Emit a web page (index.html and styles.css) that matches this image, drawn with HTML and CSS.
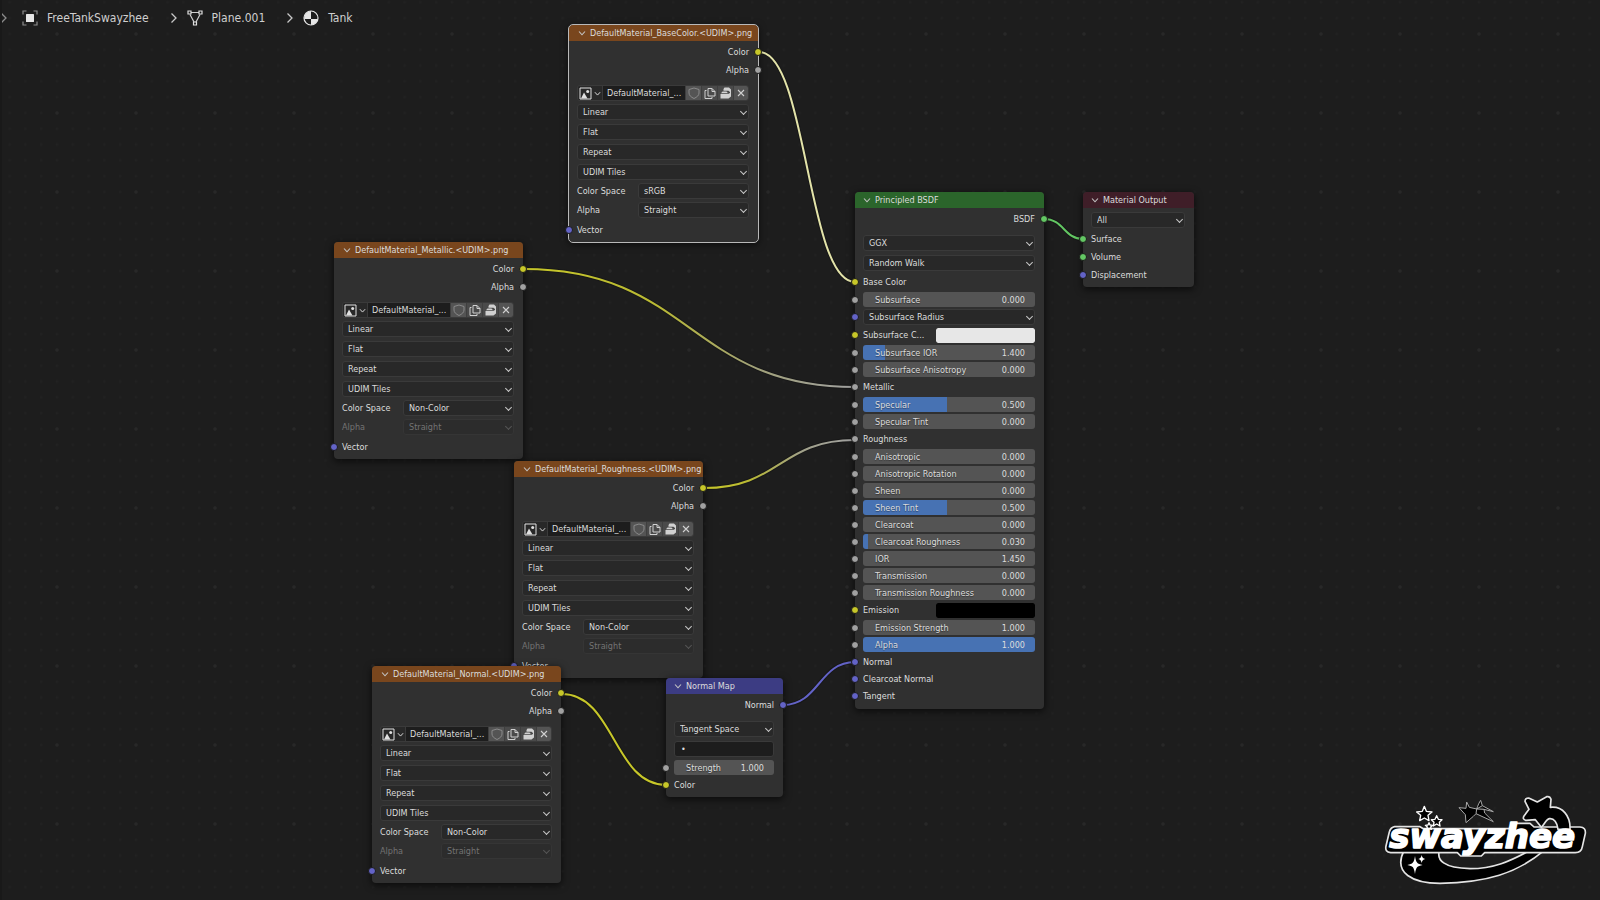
FILE: index.html
```html
<!DOCTYPE html>
<html lang="en">
<head>
<meta charset="utf-8">
<title>Shader Editor</title>
<link rel="stylesheet" href="styles.css">
</head>
<body>
<svg class="symbols" aria-hidden="true">
  <symbol id="i-chevron" viewBox="0 0 8 8"><path d="M1 2.5 4 5.8 7 2.5" fill="none" stroke="currentColor" stroke-width="1.1"/></symbol>
  <symbol id="i-right" viewBox="0 0 8 12"><path d="M1.5 1.5 6 6 1.5 10.5" fill="none" stroke="currentColor" stroke-width="1.3"/></symbol>
  <symbol id="i-image" viewBox="0 0 13 13"><path d="M1 1h11v11H1z" fill="none" stroke="currentColor"/><path d="M2 11.5 5 5.5l3.500 6z" fill="currentColor"/><circle cx="8.700" cy="4.500" r="1.500" fill="currentColor"/></symbol>
  <symbol id="i-shield" viewBox="0 0 12 12"><path d="M6 1 11 2.500V6c0 2.500-2 4-5 5.500C3 10 1 8.500 1 6V2.500z" fill="none" stroke="currentColor"/></symbol>
  <symbol id="i-copy" viewBox="0 0 12 12"><path d="M4 1.500h4L11 4.500v4.500H4z M8 1.500v3h3" fill="none" stroke="currentColor"/><path d="M2.500 3.500h-1.500v8h7v-1.500" fill="none" stroke="currentColor"/></symbol>
  <symbol id="i-pack" viewBox="0 0 12 12"><path d="M4.500 0.500h4.500l2 2v3.500h-1V5L8.500 3.800H3.500V2z" fill="currentColor"/><path d="M1 6.300 2.500 4.500h4L8 6.300z" fill="currentColor"/><path d="M0.500 7h7.500l3-1.500v4L8.500 11.500h-8z" fill="currentColor"/></symbol>
  <symbol id="i-close" viewBox="0 0 12 12"><path d="M3 3l6 6M9 3l-6 6" fill="none" stroke="currentColor" stroke-width="1.100"/></symbol>
</svg>

<main class="editor">
  <svg class="canvas" aria-hidden="true">
    <defs>
      <pattern id="minor" x="49" y="26" width="15.8" height="15.8" patternUnits="userSpaceOnUse"><circle class="dot-minor" cx="8" cy="8" r="1.300"/></pattern>
      <pattern id="major" x="17" y="-6" width="79" height="79" patternUnits="userSpaceOnUse"><circle class="dot-major" cx="40" cy="40" r="1.700"/></pattern>
      <linearGradient id="g-metal" gradientUnits="userSpaceOnUse" x1="524" y1="0" x2="855" y2="0"><stop offset="0" stop-color="#c7c729"/><stop offset="0.4" stop-color="#b9b934"/><stop offset="0.7" stop-color="#a1a17a"/><stop offset="1" stop-color="#a1a1a1"/></linearGradient>
      <linearGradient id="g-rough" gradientUnits="userSpaceOnUse" x1="704" y1="0" x2="855" y2="0"><stop offset="0" stop-color="#c7c729"/><stop offset="0.3" stop-color="#b9b934"/><stop offset="0.65" stop-color="#a1a18a"/><stop offset="1" stop-color="#a1a1a1"/></linearGradient>
    </defs>
    <rect width="100%" height="100%" fill="url(#minor)"/>
    <rect width="100%" height="100%" fill="url(#major)"/>
    <g class="link-shadow">
      <path d="M759 52C807 52 807 282 855 282"/>
      <path d="M524 269C690 269 690 387 855 387"/>
      <path d="M704 488C780 488 780 440 855 440"/>
      <path d="M562 694C614 694 614 785 666 785"/>
      <path d="M783 705C819 705 819 662 855 662"/>
      <path d="M1044 219C1064 219 1064 239 1083 239"/>
    </g>
    <g class="link">
      <path stroke="#e3e3a9" d="M759 52C807 52 807 282 855 282"/>
      <path stroke="url(#g-metal)" d="M524 269C690 269 690 387 855 387"/>
      <path stroke="url(#g-rough)" d="M704 488C780 488 780 440 855 440"/>
      <path stroke="#c7c729" d="M562 694C614 694 614 785 666 785"/>
      <path stroke="#6363c7" d="M783 705C819 705 819 662 855 662"/>
      <path stroke="#63c763" d="M1044 219C1064 219 1064 239 1083 239"/>
    </g>
  </svg>

  <nav class="crumbs" aria-label="Data path">
    <svg class="sep sep-first"><use href="#i-right"/></svg>
    <a class="crumb" href="#object"><svg class="crumb-icon" viewBox="0 0 16 16"><rect x="4" y="4" width="8" height="8" rx="0.5" fill="#e6e6e6"/><path d="M1 4.500V1h3.500M11.500 1H15v3.500M15 11.500V15h-3.500M4.500 15H1v-3.500" fill="none" stroke="#8c8c8c" stroke-width="1.200"/></svg>FreeTankSwayzhee</a>
    <svg class="sep"><use href="#i-right"/></svg>
    <a class="crumb" href="#mesh"><svg class="crumb-icon" viewBox="0 0 16 16"><path d="M4 2.500h8M3 4.500l4 7.500M13 4.500 9 12" fill="none" stroke="#d0d0d0" stroke-width="1.200"/><path d="M1 1h3v3H1zM12 1h3v3h-3zM6.500 12h3v3h-3z" fill="none" stroke="#e0e0e0" stroke-width="1.200"/></svg>Plane.001</a>
    <svg class="sep"><use href="#i-right"/></svg>
    <a class="crumb" href="#material"><svg class="crumb-icon" viewBox="0 0 16 16"><circle cx="8" cy="8" r="7" fill="#1d1d1d" stroke="#e6e6e6" stroke-width="1.200"/><path d="M8 1v8H1.200A7 7 0 0 1 8 1zM8 9h6.900A7 7 0 0 1 8 15z" fill="#e6e6e6"/></svg>Tank</a>
  </nav>

  <section class="node at-metallic">
    <h2 class="head tex"><button class="fold" aria-label="Collapse"><svg><use href="#i-chevron"/></svg></button>DefaultMaterial_Metallic.&lt;UDIM&gt;.png</h2>
    <div class="body">
      <div class="row out">Color<i class="socket yellow"></i></div>
      <div class="row out">Alpha<i class="socket gray"></i></div>
      <div class="stack">
        <div class="id"><button class="browse" aria-label="Browse image"><svg class="pic"><use href="#i-image"/></svg><svg class="mini"><use href="#i-chevron"/></svg></button><input class="name" aria-label="Image name" value="DefaultMaterial_..."><button class="tool shield" aria-label="Fake user"><svg><use href="#i-shield"/></svg></button><button class="tool" aria-label="New image"><svg><use href="#i-copy"/></svg></button><button class="tool" aria-label="Pack"><svg><use href="#i-pack"/></svg></button><button class="tool close" aria-label="Unlink"><svg><use href="#i-close"/></svg></button></div>
        <div class="drop"><select aria-label="Interpolation"><option>Linear</option></select></div>
        <div class="drop"><select aria-label="Projection"><option>Flat</option></select></div>
        <div class="drop"><select aria-label="Extension"><option>Repeat</option></select></div>
        <div class="drop"><select aria-label="Source"><option>UDIM Tiles</option></select></div>
      </div>
      <div class="fields">
        <div class="field"><label for="m-cs">Color Space</label><div class="drop"><select id="m-cs"><option>Non-Color</option></select></div></div>
        <div class="field off"><label for="m-al">Alpha</label><div class="drop"><select id="m-al" disabled><option>Straight</option></select></div></div>
      </div>
      <div class="row">Vector<i class="socket violet"></i></div>
    </div>
  </section>

  <section class="node selected at-base">
    <h2 class="head tex"><button class="fold" aria-label="Collapse"><svg><use href="#i-chevron"/></svg></button>DefaultMaterial_BaseColor.&lt;UDIM&gt;.png</h2>
    <div class="body">
      <div class="row out">Color<i class="socket yellow"></i></div>
      <div class="row out">Alpha<i class="socket gray"></i></div>
      <div class="stack">
        <div class="id"><button class="browse" aria-label="Browse image"><svg class="pic"><use href="#i-image"/></svg><svg class="mini"><use href="#i-chevron"/></svg></button><input class="name" aria-label="Image name" value="DefaultMaterial_..."><button class="tool shield" aria-label="Fake user"><svg><use href="#i-shield"/></svg></button><button class="tool" aria-label="New image"><svg><use href="#i-copy"/></svg></button><button class="tool" aria-label="Pack"><svg><use href="#i-pack"/></svg></button><button class="tool close" aria-label="Unlink"><svg><use href="#i-close"/></svg></button></div>
        <div class="drop"><select aria-label="Interpolation"><option>Linear</option></select></div>
        <div class="drop"><select aria-label="Projection"><option>Flat</option></select></div>
        <div class="drop"><select aria-label="Extension"><option>Repeat</option></select></div>
        <div class="drop"><select aria-label="Source"><option>UDIM Tiles</option></select></div>
      </div>
      <div class="fields">
        <div class="field"><label for="b-cs">Color Space</label><div class="drop"><select id="b-cs"><option>sRGB</option></select></div></div>
        <div class="field"><label for="b-al">Alpha</label><div class="drop"><select id="b-al"><option>Straight</option></select></div></div>
      </div>
      <div class="row">Vector<i class="socket violet"></i></div>
    </div>
  </section>

  <section class="node at-rough">
    <h2 class="head tex"><button class="fold" aria-label="Collapse"><svg><use href="#i-chevron"/></svg></button>DefaultMaterial_Roughness.&lt;UDIM&gt;.png</h2>
    <div class="body">
      <div class="row out">Color<i class="socket yellow"></i></div>
      <div class="row out">Alpha<i class="socket gray"></i></div>
      <div class="stack">
        <div class="id"><button class="browse" aria-label="Browse image"><svg class="pic"><use href="#i-image"/></svg><svg class="mini"><use href="#i-chevron"/></svg></button><input class="name" aria-label="Image name" value="DefaultMaterial_..."><button class="tool shield" aria-label="Fake user"><svg><use href="#i-shield"/></svg></button><button class="tool" aria-label="New image"><svg><use href="#i-copy"/></svg></button><button class="tool" aria-label="Pack"><svg><use href="#i-pack"/></svg></button><button class="tool close" aria-label="Unlink"><svg><use href="#i-close"/></svg></button></div>
        <div class="drop"><select aria-label="Interpolation"><option>Linear</option></select></div>
        <div class="drop"><select aria-label="Projection"><option>Flat</option></select></div>
        <div class="drop"><select aria-label="Extension"><option>Repeat</option></select></div>
        <div class="drop"><select aria-label="Source"><option>UDIM Tiles</option></select></div>
      </div>
      <div class="fields">
        <div class="field"><label for="r-cs">Color Space</label><div class="drop"><select id="r-cs"><option>Non-Color</option></select></div></div>
        <div class="field off"><label for="r-al">Alpha</label><div class="drop"><select id="r-al" disabled><option>Straight</option></select></div></div>
      </div>
      <div class="row">Vector<i class="socket violet"></i></div>
    </div>
  </section>

  <section class="node at-normal">
    <h2 class="head tex"><button class="fold" aria-label="Collapse"><svg><use href="#i-chevron"/></svg></button>DefaultMaterial_Normal.&lt;UDIM&gt;.png</h2>
    <div class="body">
      <div class="row out">Color<i class="socket yellow"></i></div>
      <div class="row out">Alpha<i class="socket gray"></i></div>
      <div class="stack">
        <div class="id"><button class="browse" aria-label="Browse image"><svg class="pic"><use href="#i-image"/></svg><svg class="mini"><use href="#i-chevron"/></svg></button><input class="name" aria-label="Image name" value="DefaultMaterial_..."><button class="tool shield" aria-label="Fake user"><svg><use href="#i-shield"/></svg></button><button class="tool" aria-label="New image"><svg><use href="#i-copy"/></svg></button><button class="tool" aria-label="Pack"><svg><use href="#i-pack"/></svg></button><button class="tool close" aria-label="Unlink"><svg><use href="#i-close"/></svg></button></div>
        <div class="drop"><select aria-label="Interpolation"><option>Linear</option></select></div>
        <div class="drop"><select aria-label="Projection"><option>Flat</option></select></div>
        <div class="drop"><select aria-label="Extension"><option>Repeat</option></select></div>
        <div class="drop"><select aria-label="Source"><option>UDIM Tiles</option></select></div>
      </div>
      <div class="fields">
        <div class="field"><label for="n-cs">Color Space</label><div class="drop"><select id="n-cs"><option>Non-Color</option></select></div></div>
        <div class="field off"><label for="n-al">Alpha</label><div class="drop"><select id="n-al" disabled><option>Straight</option></select></div></div>
      </div>
      <div class="row">Vector<i class="socket violet"></i></div>
    </div>
  </section>

  <section class="node at-map">
    <h2 class="head vector"><button class="fold" aria-label="Collapse"><svg><use href="#i-chevron"/></svg></button>Normal Map</h2>
    <div class="body">
      <div class="row out">Normal<i class="socket violet"></i></div>
      <div class="stack">
        <div class="drop"><select aria-label="Space"><option>Tangent Space</option></select></div>
        <input class="uv" aria-label="UV Map" value="•">
      </div>
      <div class="slider spaced"><input type="range" id="strength" min="0" max="10" step="0.001" value="1"><label for="strength">Strength</label><output>1.000</output><i class="socket gray"></i></div>
      <div class="row">Color<i class="socket yellow"></i></div>
    </div>
  </section>

  <section class="node at-bsdf">
    <h2 class="head shader"><button class="fold" aria-label="Collapse"><svg><use href="#i-chevron"/></svg></button>Principled BSDF</h2>
    <div class="body">
      <div class="row out">BSDF<i class="socket green"></i></div>
      <div class="stack">
        <div class="drop"><select aria-label="Distribution"><option>GGX</option></select></div>
        <div class="drop"><select aria-label="Subsurface method"><option>Random Walk</option></select></div>
      </div>
      <div class="row spaced">Base Color<i class="socket yellow"></i></div>
      <div class="slider"><input type="range" id="s1" value="0"><label for="s1">Subsurface</label><output>0.000</output><i class="socket gray"></i></div>
      <div class="row"><div class="drop"><select aria-label="Subsurface Radius"><option>Subsurface Radius</option></select></div><i class="socket violet"></i></div>
      <div class="row"><label for="c1">Subsurface C...</label><input class="swatch" type="color" id="c1" value="#e7e7e7"><i class="socket yellow"></i></div>
      <div class="slider" style="--fill:13%"><input type="range" id="s2" value="13"><label for="s2">Subsurface IOR</label><output>1.400</output><i class="socket gray"></i></div>
      <div class="slider"><input type="range" id="s3" value="0"><label for="s3">Subsurface Anisotropy</label><output>0.000</output><i class="socket gray"></i></div>
      <div class="row">Metallic<i class="socket gray"></i></div>
      <div class="slider" style="--fill:49%"><input type="range" id="s4" value="50"><label for="s4">Specular</label><output>0.500</output><i class="socket gray"></i></div>
      <div class="slider"><input type="range" id="s5" value="0"><label for="s5">Specular Tint</label><output>0.000</output><i class="socket gray"></i></div>
      <div class="row">Roughness<i class="socket gray"></i></div>
      <div class="slider"><input type="range" id="s6" value="0"><label for="s6">Anisotropic</label><output>0.000</output><i class="socket gray"></i></div>
      <div class="slider"><input type="range" id="s7" value="0"><label for="s7">Anisotropic Rotation</label><output>0.000</output><i class="socket gray"></i></div>
      <div class="slider"><input type="range" id="s8" value="0"><label for="s8">Sheen</label><output>0.000</output><i class="socket gray"></i></div>
      <div class="slider" style="--fill:49%"><input type="range" id="s9" value="50"><label for="s9">Sheen Tint</label><output>0.500</output><i class="socket gray"></i></div>
      <div class="slider"><input type="range" id="s10" value="0"><label for="s10">Clearcoat</label><output>0.000</output><i class="socket gray"></i></div>
      <div class="slider" style="--fill:3%"><input type="range" id="s11" value="3"><label for="s11">Clearcoat Roughness</label><output>0.030</output><i class="socket gray"></i></div>
      <div class="slider"><input type="range" id="s12" value="0"><label for="s12">IOR</label><output>1.450</output><i class="socket gray"></i></div>
      <div class="slider"><input type="range" id="s13" value="0"><label for="s13">Transmission</label><output>0.000</output><i class="socket gray"></i></div>
      <div class="slider"><input type="range" id="s14" value="0"><label for="s14">Transmission Roughness</label><output>0.000</output><i class="socket gray"></i></div>
      <div class="row"><label for="c2">Emission</label><input class="swatch" type="color" id="c2" value="#000000"><i class="socket yellow"></i></div>
      <div class="slider"><input type="range" id="s15" value="0"><label for="s15">Emission Strength</label><output>1.000</output><i class="socket gray"></i></div>
      <div class="slider" style="--fill:100%"><input type="range" id="s16" value="100"><label for="s16">Alpha</label><output>1.000</output><i class="socket gray"></i></div>
      <div class="row tight">Normal<i class="socket violet"></i></div>
      <div class="row tight">Clearcoat Normal<i class="socket violet"></i></div>
      <div class="row tight">Tangent<i class="socket violet"></i></div>
    </div>
  </section>

  <section class="node at-output">
    <h2 class="head output"><button class="fold" aria-label="Collapse"><svg><use href="#i-chevron"/></svg></button>Material Output</h2>
    <div class="body">
      <div class="drop first"><select aria-label="Target"><option>All</option></select></div>
      <div class="row spaced">Surface<i class="socket green"></i></div>
      <div class="row">Volume<i class="socket green"></i></div>
      <div class="row">Displacement<i class="socket violet"></i></div>
    </div>
  </section>

  <svg class="logo" viewBox="0 0 690 360" role="img" aria-label="swayzhee">
    <g class="logo-shape">
      <path d="M102 212C68 280 130 310 210 310C350 308 440 280 522 212L478 212C420 244 370 266 300 266C220 264 200 240 208 212z"/>
      <path d="M74 140H150L160 146H420L436 130H480L492 141H630Q648 142 646 160L637 200Q634 218 616 218H344L334 228H272L262 218H62Q44 216 48 198L58 156Q62 142 74 140z"/>
      <path d="M476 54L502 66L530 50Q540 48 543 58L541 82C578 78 602 108 600 148L564 148C562 128 552 114 538 116C528 118 524 132 514 142L496 119L468 121Q456 118 462 108L477 88L465 64Q465 54 476 54z"/>
    </g>
    <path class="logo-trail" d="M290 66l8 16 22 5c4-12 8-20 12-26l5 16 33 18-28-7 2 11 26 26-52-24-8 8-22 19-2-24-19-21 21 2zM320 87l-2 14M337 77l-17 10 22 1"/>
    <text class="logo-text" x="58" y="204">swayzhee</text>
    <g class="logo-stars">
      <path d="M163 79l6 15 17 2-12 10 3 16-14-8-14 8 3-16-12-10 17-2z"/>
      <path d="M200 107l5 11 11 1-8 8 2 11-10-6-10 6 2-11-8-8 11-1z"/>
      <path d="M177 128l3 7 8 1-6 5 2 7-7-4-7 4 2-7-6-5 8-1z"/>
    </g>
    <path fill="#fff" d="M135 228C138 248 141 252 158 255C141 258 138 262 135 282C132 262 129 258 112 255C129 252 132 248 135 228zM155 225C157 233 159 235 166 237C159 239 157 241 155 249C153 241 151 239 145 237C151 235 153 233 155 225z"/>
  </svg>
</main>
</body>
</html>
```
FILE: styles.css
```css
* { box-sizing: border-box; }

body {
  margin: 0;
  background: #1d1d1d;
  color: #dcdcdc;
  font: 9px/12px "DejaVu Sans Condensed", "DejaVu Sans", sans-serif;
}

button, input, select {
  margin: 0;
  padding: 0;
  border: 0;
  border-radius: 0;
  background: none;
  color: inherit;
  font: inherit;
  outline: 0;
}

.symbols { position: absolute; width: 0; height: 0; }

.editor {
  position: relative;
  min-height: 100vh;
  overflow: hidden;
  border-left: 2px solid #191919;
}

.canvas {
  position: absolute;
  top: 0;
  left: -2px;
  width: calc(100% + 2px);
  height: 100%;
}

.dot-minor { fill: #212121; }
.dot-major { fill: #282828; }
.link path { fill: none; stroke-width: 2; }
.link-shadow path { fill: none; stroke: #111; stroke-width: 4; opacity: 0.5; }

/* Data path */
.crumbs {
  position: relative;
  display: flex;
  align-items: center;
  height: 35px;
  font-size: 12px;
}

.crumb {
  display: flex;
  align-items: center;
  gap: 9px;
  color: #cfcfcf;
  text-decoration: none;
}

.crumb-icon { width: 16px; height: 16px; }
.sep { width: 8px; height: 12px; margin: 0 9px 0 21px; color: #c8c8c8; }
.sep-first { margin: 0 14px 0 -2px; color: #8c8c8c; }

/* Nodes */
.node {
  position: absolute;
  width: 189px;
  border-radius: 4px;
  background: #303030;
  box-shadow: 0 2px 7px 1px rgba(0, 0, 0, 0.55);
}

.selected { outline: 1px solid #b9b9b9; }

.at-base { left: 567px; top: 25px; }
.at-metallic { left: 332px; top: 242px; }
.at-rough { left: 512px; top: 461px; }
.at-normal { left: 370px; top: 666px; }
.at-map { left: 664px; top: 678px; width: 117px; }
.at-bsdf { left: 853px; top: 192px; }
.at-output { left: 1081px; top: 192px; width: 111px; }

.head {
  display: flex;
  align-items: center;
  height: 16px;
  padding-bottom: 1px;
  margin: 0;
  border-radius: 4px 4px 0 0;
  font-size: 9px;
  font-weight: 400;
  white-space: nowrap;
}

.tex { background: #79461d; }
.vector { background: #3c3c83; }
.shader { background: #2b652b; }
.output { background: #3f1e28; }

.fold { display: grid; place-items: center; width: 20px; padding-left: 4px; color: #c4c4c4; }
.tex .fold { width: 21px; }
.fold svg { width: 8px; height: 8px; }

.body { padding: 2px 9px 3px 8px; }
.at-bsdf .body { padding-bottom: 5px; }

.row {
  position: relative;
  display: flex;
  align-items: center;
  justify-content: space-between;
  height: 18px;
}

.tight { height: 17px; }
.out { justify-content: flex-end; }
.spaced { margin-top: 2px; }

.stack { display: grid; gap: 4px; margin-top: 7px; }
.out + .out + .stack { margin-top: 6px; }
.fields { display: grid; gap: 3px; margin: 3px 0; }

.field { display: grid; grid-template-columns: 61px 1fr; align-items: center; }
.off { color: #737373; }

.drop { position: relative; flex: 1; height: 16px; }
.first { margin-top: 2px; }

.drop select {
  display: block;
  width: 100%;
  height: 16px;
  padding-left: 5px;
  border: 1px solid #3a3a3a;
  border-radius: 3px;
  background: #282828;
  appearance: none;
}

.drop select:disabled { border-color: #353535; background: #2c2c2c; color: #737373; opacity: 1; }

.drop::after {
  content: "";
  position: absolute;
  top: 5px;
  right: 3px;
  width: 4px;
  height: 4px;
  border: solid #c8c8c8;
  border-width: 0 1px 1px 0;
  transform: rotate(45deg);
  pointer-events: none;
}

.off .drop::after { border-color: #555; }

.id {
  display: grid;
  grid-template-columns: 24px 1fr 16px 16px 16px 15px;
  height: 16px;
  margin-bottom: -1px;
  overflow: hidden;
  border: 1px solid #3a3a3a;
  border-radius: 3px;
}

.browse { display: flex; align-items: center; gap: 2px; padding-left: 1px; background: #282828; color: #e0e0e0; }
.pic { width: 13px; height: 13px; }
.mini { width: 7px; height: 7px; }
.name { min-width: 0; padding-left: 4px; border-left: 1px solid #3a3a3a; background: #1d1d1d; }
.tool { display: grid; place-items: center; border-left: 1px solid #3f3f3f; background: #4a4a4a; color: #d0d0d0; }
.tool svg { width: 12px; height: 12px; }
.shield, .close { background: #545454; }
.shield { color: #8a8a8a; }

.uv { width: 100%; height: 16px; padding-left: 6px; border: 1px solid #3a3a3a; border-radius: 3px; background: #1d1d1d; }

.slider {
  position: relative;
  display: grid;
  grid-template-columns: 1fr auto;
  align-items: center;
  height: 17px;
  padding: 0 10px 0 12px;
}

.slider > * { grid-row: 1; }
.slider label { grid-column: 1; z-index: 1; pointer-events: none; white-space: nowrap; text-shadow: 0 1px 1px rgba(0, 0, 0, 0.4); }
.slider output { grid-column: 2; z-index: 1; pointer-events: none; }

.slider input {
  grid-column: 1 / 3;
  height: 15px;
  margin: 0 -10px 0 -12px;
  border-radius: 3px;
  background: linear-gradient(90deg, #4772b3 var(--fill, 0%), #545454 var(--fill, 0%));
  appearance: none;
}

.slider input::-webkit-slider-thumb { appearance: none; width: 1px; height: 15px; opacity: 0; }

.swatch { width: 99px; height: 15px; border-radius: 2px; overflow: hidden; }
.swatch::-webkit-color-swatch-wrapper { padding: 0; }
.swatch::-webkit-color-swatch { border: 0; border-radius: 2px; }

/* Sockets sit over the node's edge */
.socket {
  position: absolute;
  top: 50%;
  left: -12px;
  width: 8px;
  height: 8px;
  margin-top: -4px;
  border: 1px solid #1a1a1a;
  border-radius: 50%;
}

.out .socket { left: auto; right: -13px; }
.yellow { background: #c7c729; }
.gray { background: #a1a1a1; }
.violet { background: #6363c7; }
.green { background: #63c763; }

/* Watermark */
.logo { position: absolute; right: 0; bottom: 0; width: 230px; height: 120px; }
.logo-shape path { fill: #000; stroke: #e4e4e4; stroke-width: 5; stroke-linejoin: round; }
.logo-stars path { fill: #000; stroke: #fff; stroke-width: 4; stroke-linejoin: round; }
.logo-trail { fill: #000; stroke: #a8a8a8; stroke-width: 3; stroke-linejoin: round; }
.logo-text { fill: #fff; stroke: #fff; stroke-width: 5; stroke-linejoin: round; font: italic 700 102px "DejaVu Sans", sans-serif; }
```
